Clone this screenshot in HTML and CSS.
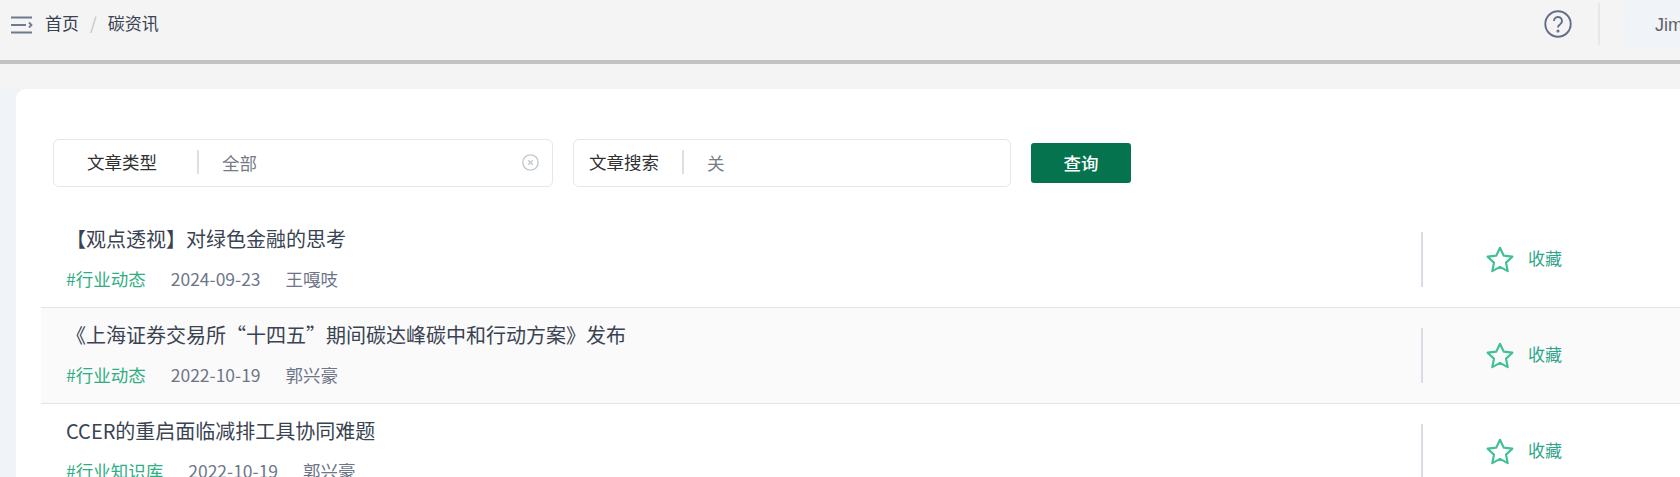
FILE: index.html
```html
<!DOCTYPE html>
<html lang="zh-CN">
<head>
  <meta charset="UTF-8">
  <title>碳资讯</title>
  <link rel="stylesheet" href="styles.css">
</head>
<body>
  <div class="app">
    <header class="topbar">
      <div class="crumbs">
        <svg class="menu-icon" width="22" height="18" viewBox="0 0 22 18" fill="none" stroke="#6f7a8f" stroke-width="1.8">
          <path d="M0 1.5H21M0 9H15M0 16.5H21M18 6.5L20.5 9L18 11.5"/>
        </svg>
        <span class="crumb">首页</span>
        <span class="crumb-sep">/</span>
        <span class="crumb">碳资讯</span>
      </div>
      <div class="tools">
        <svg class="help-icon" width="28" height="28" viewBox="0 0 28 28" fill="none" stroke="#626d85" stroke-width="1.9">
          <circle cx="14" cy="14" r="12.7"/>
          <path d="M10 11a4 4 0 1 1 6.2 3.3c-1.4.9-2.2 1.6-2.2 3.2"/>
          <circle cx="14" cy="21" r="0.6" fill="#626d85"/>
        </svg>
        <span class="tools-line"></span>
        <div class="user-chip">Jimmy</div>
      </div>
    </header>
    <div class="tag-strip"></div>

    <main class="content">
      <div class="card">
        <form class="search">
          <div class="field field-type">
            <label>文章类型</label>
            <span class="field-value">全部</span>
            <svg class="clear-icon" width="17" height="17" viewBox="0 0 16 16" fill="none" stroke="#c3c8d2" stroke-width="1.3">
              <circle cx="8" cy="8" r="7.2"/>
              <path d="M5.8 5.8L10.2 10.2M10.2 5.8L5.8 10.2"/>
            </svg>
          </div>
          <div class="field field-word">
            <label>文章搜索</label>
            <span class="field-value">关</span>
          </div>
          <button type="button" class="search-btn">查询</button>
        </form>

        <div class="list">
          <div class="row">
            <div class="row-main">
              <h3>【观点透视】对绿色金融的思考</h3>
              <p class="meta"><span class="tag">#行业动态</span><span>2024-09-23</span><span>王嘎吱</span></p>
            </div>
            <div class="row-side">
              <svg class="star" width="28" height="27" viewBox="0 0 28 27" fill="none" stroke="#43c096" stroke-width="2.2" stroke-linejoin="round">
                <path d="M14 1.8L17.7 9.6L26.4 10.7L20 16.6L21.7 25.1L14 20.9L6.3 25.1L8 16.6L1.6 10.7L10.3 9.6Z"/>
              </svg>
              <span class="fav">收藏</span>
            </div>
          </div>
          <div class="row row-alt">
            <div class="row-main">
              <h3>《上海证券交易所“十四五”期间碳达峰碳中和行动方案》发布</h3>
              <p class="meta"><span class="tag">#行业动态</span><span>2022-10-19</span><span>郭兴豪</span></p>
            </div>
            <div class="row-side">
              <svg class="star" width="28" height="27" viewBox="0 0 28 27" fill="none" stroke="#43c096" stroke-width="2.2" stroke-linejoin="round">
                <path d="M14 1.8L17.7 9.6L26.4 10.7L20 16.6L21.7 25.1L14 20.9L6.3 25.1L8 16.6L1.6 10.7L10.3 9.6Z"/>
              </svg>
              <span class="fav">收藏</span>
            </div>
          </div>
          <div class="row">
            <div class="row-main">
              <h3>CCER的重启面临减排工具协同难题</h3>
              <p class="meta"><span class="tag">#行业知识库</span><span>2022-10-19</span><span>郭兴豪</span></p>
            </div>
            <div class="row-side">
              <svg class="star" width="28" height="27" viewBox="0 0 28 27" fill="none" stroke="#43c096" stroke-width="2.2" stroke-linejoin="round">
                <path d="M14 1.8L17.7 9.6L26.4 10.7L20 16.6L21.7 25.1L14 20.9L6.3 25.1L8 16.6L1.6 10.7L10.3 9.6Z"/>
              </svg>
              <span class="fav">收藏</span>
            </div>
          </div>
        </div>
      </div>
    </main>
  </div>
</body>
</html>
```

FILE: styles.css
```css
html, body {
  margin: 0;
  padding: 0;
  height: 100%;
  overflow: hidden;
}
body {
  font-family: "Noto Sans CJK SC", "Noto Sans", sans-serif;
  background: #f0f3f7;
}
.app {
  width: 1720px;
}

.topbar {
  display: flex;
  justify-content: space-between;
  height: 60px;
  background: #f4f4f4;
  border-bottom: 4px solid #c2c2c2;
}
.crumbs {
  display: flex;
  align-items: center;
  height: 44px;
  padding-left: 11px;
  font-size: 17px;
  color: #3a4352;
}
.menu-icon {
  margin: 5px 12px 0 0;
}
.crumb-sep {
  margin: 0 11px;
  color: #c0c4cc;
}
.tools {
  display: flex;
  align-items: flex-start;
  width: 176px;
}
.help-icon {
  margin-top: 10px;
}
.tools-line {
  width: 2px;
  height: 42px;
  margin: 3px 24px 0 26px;
  background: #e4e7ec;
}
.user-chip {
  width: 96px;
  height: 47px;
  padding-left: 31px;
  box-sizing: border-box;
  background: #f0f3f7;
  border-radius: 4px;
  font-family: "Liberation Sans", sans-serif;
  font-size: 18px;
  line-height: 50px;
  color: #606266;
}
.tag-strip {
  height: 25px;
  background: #f4f4f4;
}

.content {
  padding-left: 16px;
}
.card {
  background: #fff;
  border-radius: 10px 0 0 0;
  padding: 50px 0 0 25px;
}

.search {
  display: flex;
  align-items: center;
  margin-left: 12px;
}
.field {
  display: flex;
  align-items: center;
  position: relative;
  height: 48px;
  box-sizing: border-box;
  padding-bottom: 2px;
  border: 1px solid #e4e7ed;
  border-radius: 6px;
  font-size: 17.5px;
}
.field-type {
  width: 500px;
  padding-left: 33px;
}
.field-word {
  width: 438px;
  margin-left: 20px;
  padding-left: 15px;
}
.field label {
  color: #303133;
  line-height: 24px;
  padding-right: 23px;
  border-right: 2px solid #dcdfe6;
}
.field-type label {
  padding-right: 40px;
}
.field-value {
  margin-left: 23px;
  color: #757b87;
}
.clear-icon {
  position: absolute;
  right: 13px;
  top: 14px;
}
.search-btn {
  width: 100px;
  height: 40px;
  margin-left: 20px;
  padding: 0 0 2px;
  border: none;
  border-radius: 3px;
  background: #06734f;
  color: #fff;
  font-family: inherit;
  font-size: 17.5px;
  font-weight: 500;
}

.list {
  margin-top: 25px;
}
.row {
  display: flex;
  align-items: center;
  height: 96px;
  box-sizing: border-box;
  border-bottom: 1px solid #e4e4e4;
}
.row-alt {
  background: #fafafa;
}
.row-main {
  flex: 1;
  padding: 0 0 4px 25px;
}
.row-main h3 {
  margin: 0;
  font-size: 20px;
  font-weight: 400;
  line-height: 30px;
  color: #3a4352;
}
.meta {
  display: flex;
  gap: 25px;
  margin: 13px 0 0;
  font-size: 17.5px;
  line-height: 24px;
  color: #6e7587;
}
.tag {
  color: #2fae84;
}
.row-side {
  display: flex;
  align-items: center;
  width: 299px;
  height: 55px;
  box-sizing: border-box;
  border-left: 2px solid #d7dce5;
  padding: 0 0 1px 63px;
}
.fav {
  margin: 0 0 3px 14px;
  font-size: 17px;
  color: #2fa58a;
}
```
